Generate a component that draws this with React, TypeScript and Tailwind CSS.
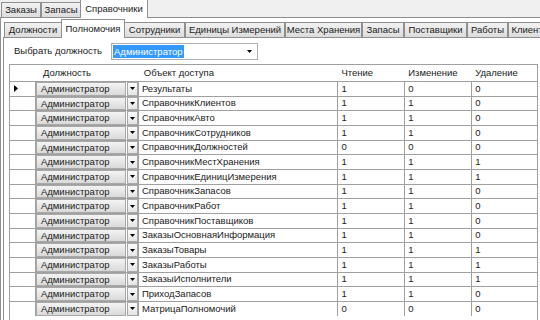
import React from 'react';

const ROWS: [string, number, number, number][] = [
  ['Результаты', 1, 0, 0],
  ['СправочникКлиентов', 1, 1, 0],
  ['СправочникАвто', 1, 1, 0],
  ['СправочникСотрудников', 1, 1, 0],
  ['СправочникДолжностей', 0, 0, 0],
  ['СправочникМестХранения', 1, 1, 1],
  ['СправочникЕдиницИзмерения', 1, 1, 1],
  ['СправочникЗапасов', 1, 1, 0],
  ['СправочникРабот', 1, 1, 0],
  ['СправочникПоставщиков', 1, 1, 0],
  ['ЗаказыОсновнаяИнформация', 1, 1, 0],
  ['ЗаказыТовары', 1, 1, 1],
  ['ЗаказыРаботы', 1, 1, 1],
  ['ЗаказыИсполнители', 1, 1, 1],
  ['ПриходЗапасов', 1, 1, 0],
  ['МатрицаПолномочий', 0, 0, 0],
];

const INNER_TABS = [
  { label: 'Должности', w: 'w-[58px]' },
  { label: 'Полномочия', w: 'w-[64px]', active: true },
  { label: 'Сотрудники', w: 'w-[61px]' },
  { label: 'Единицы Измерений', w: 'w-[100px]' },
  { label: 'Места Хранения', w: 'w-[77px]' },
  { label: 'Запасы', w: 'w-[42px]' },
  { label: 'Поставщики', w: 'w-[63px]' },
  { label: 'Работы', w: 'w-[41px]' },
  { label: 'Клиенты', w: 'w-[45px]' },
];

const Arrow = () => (
  <svg width="5" height="3" viewBox="0 0 5 3" className="block">
    <path d="M0 0h5L2.5 3z" fill="#000" />
  </svg>
);

const Tab = ({ label, w, active }: { label: string; w: string; active?: boolean }) =>
  active ? (
    <div
      className={`${w} h-[19px] shrink-0 -mb-px -mx-px z-10 flex items-start pt-[2px] justify-center border border-b-0 border-[#8e8f8f] bg-white`}
    >
      {label}
    </div>
  ) : (
    <div
      className={`${w} h-[15px] shrink-0 flex items-center justify-center border border-b-0 border-[#8e8f8f] bg-gradient-to-b from-[#f2f2f2] to-[#dcdcdc] overflow-hidden whitespace-nowrap`}
    >
      {label}
    </div>
  );

export default function App() {
  return (
    <div className="w-[540px] h-[320px] overflow-hidden bg-[#f0f0f0] text-[9.5px] text-[#1a1a1a] font-['Liberation_Sans',Arial,sans-serif] flex flex-col">
      {/* outer tabs */}
      <div className="flex items-end h-[17px] pl-[1px] shrink-0">
        <Tab label="Заказы" w="w-[40px]" />
        <Tab label="Запасы" w="w-[40px]" />
        <Tab label="Справочники" w="w-[68px]" active />
      </div>
      <div className="flex-1 border-l border-t border-[#8e8f8f] bg-white flex flex-col pl-[2px] min-h-0">
        {/* inner tabs */}
        <div className="flex items-end h-[19px] pl-[1px] shrink-0">
          {INNER_TABS.map((t) => (
            <Tab key={t.label} {...t} />
          ))}
        </div>
        <div className="flex-1 border-l border-t border-[#8e8f8f] bg-white flex flex-col min-h-0">
          {/* selector */}
          <div className="flex items-center h-[26px] pl-[10px] shrink-0">
            <span className="w-[97px]">Выбрать должность</span>
            <div className="w-[147px] h-[17px] border border-[#abadb3] flex items-center pl-[1px] pr-[5px]">
              <span className="bg-[#3399ff] text-white px-[1px] leading-[13px]">Администратор</span>
              <span className="ml-auto">
                <Arrow />
              </span>
            </div>
          </div>
          {/* grid */}
          <div className="ml-[5px] w-[529px] flex-1 border-l border-t border-r border-[#a0a0a0] bg-white flex flex-col min-h-0">
            <div className="flex h-[16px] shrink-0 items-center">
              <div className="w-[26px]" />
              <div className="w-[103px] pl-[7px]">Должность</div>
              <div className="w-[200px] pl-[5px]">Объект доступа</div>
              <div className="w-[67px] pl-[3px]">Чтение</div>
              <div className="w-[67px] pl-[3px]">Изменение</div>
              <div className="w-[65px] pl-[3px]">Удаление</div>
            </div>
            {ROWS.map(([name, r, c, d], i) => (
              <div key={name} className="flex h-[14.67px] shrink-0 border-t border-[#a0a0a0]">
                <div className="w-[26px] border-r border-[#a0a0a0] flex items-center pl-[4px]">
                  {i === 0 && (
                    <svg width="4" height="7" viewBox="0 0 4 7">
                      <path d="M0 0l4 3.5L0 7z" fill="#000" />
                    </svg>
                  )}
                </div>
                <div className="w-[103px] flex border-r border-[#a0a0a0]">
                  <div className="w-[91px] border border-[#a8a8a8] bg-gradient-to-b from-[#f4f4f4] to-[#d9d9d9] flex items-center pl-[4px] leading-none">
                    Администратор
                  </div>
                  <div className="w-[11px] ml-[1px] border border-[#a8a8a8] bg-gradient-to-b from-[#fbfbfb] to-[#e4e4e4] flex items-center justify-center">
                    <Arrow />
                  </div>
                </div>
                <div className="w-[200px] border-r border-[#a0a0a0] flex items-center pl-[3px]">{name}</div>
                <div className="w-[67px] border-r border-[#a0a0a0] flex items-center pl-[3px]">{r}</div>
                <div className="w-[67px] border-r border-[#a0a0a0] flex items-center pl-[3px]">{c}</div>
                <div className="w-[65px] flex items-center pl-[3px]">{d}</div>
              </div>
            ))}
          </div>
        </div>
      </div>
    </div>
  );
}
